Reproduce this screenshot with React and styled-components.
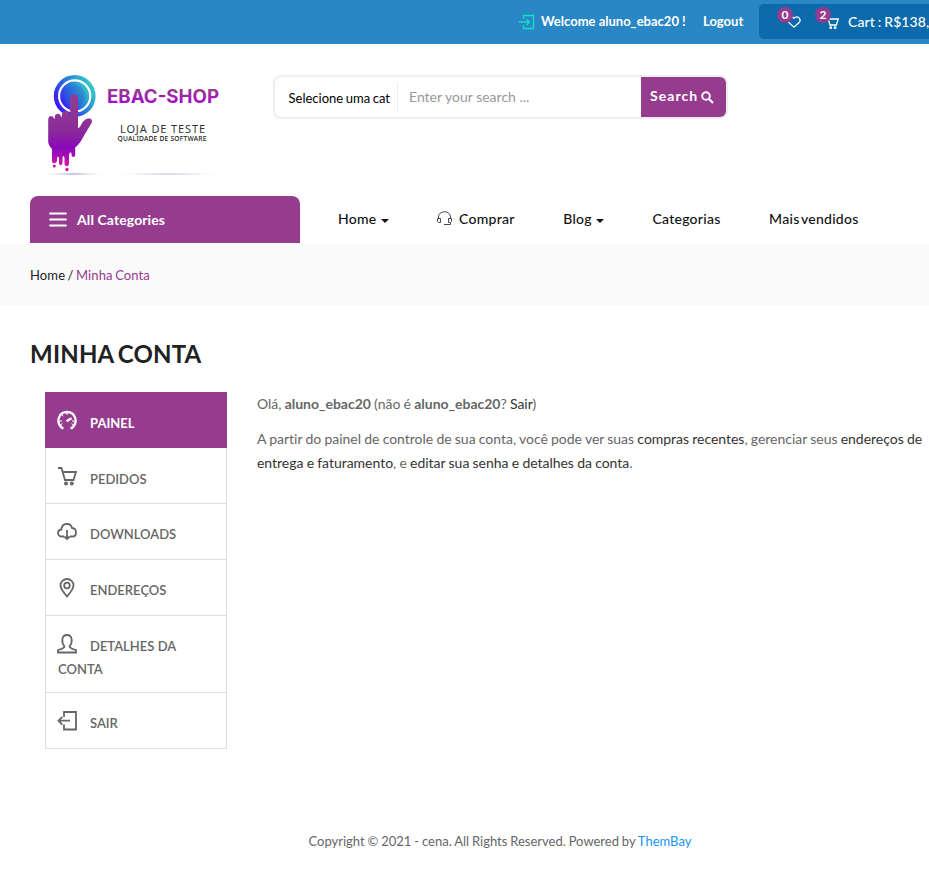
import React from "react";
import styled, { createGlobalStyle, css } from "styled-components";

const GlobalStyle = createGlobalStyle`
  *, *::before, *::after { box-sizing: border-box; }
  body {
    margin: 0;
    background: #fff;
    color: #666;
    font-family: Lato, "Liberation Sans", sans-serif;
    font-size: 14px;
    line-height: 24px;
    overflow: hidden;
  }
`;

const purple = "#963c8e";

const Page = styled.div`
  width: 929px;
  height: 887px;
  overflow: hidden;
`;

const TopBar = styled.div`
  display: flex;
  height: 44px;
  padding: 4px 0 0 519px;
  background: #2a87c5;
  color: #fff;
  white-space: nowrap;
`;

const Account = styled.div`
  display: flex;
  align-items: center;
  height: 35px;
  width: 240px;
  flex: none;
  font-size: 13px;
  font-weight: 700;
  line-height: 22px;
  padding-bottom: 1px;

  svg { margin-top: 1px; }
`;

const Welcome = styled.span`
  width: 162px;
  margin-left: 6px;
`;

const Logout = styled.a`
  color: #fff;
`;

const MiniCart = styled.div`
  display: flex;
  align-items: center;
  flex: none;
  width: 230px;
  height: 35px;
  padding-left: 27px;
  border-radius: 5px;
  background: #0b6aab;
`;

const IconWithBadge = styled.div`
  position: relative;
  display: flex;
  width: 15px;
  height: 15px;
  margin-right: ${(p) => p.$gap};
`;

const Badge = styled.span`
  position: absolute;
  left: -9px;
  top: -7px;
  width: 16px;
  height: 16px;
  border-radius: 50%;
  background: ${purple};
  font-size: 12px;
  font-weight: 700;
  line-height: 16px;
  text-align: center;
`;

const CartTotal = styled.span`
  font-size: 14px;
  font-weight: 500;
  word-spacing: -0.8px;
  letter-spacing: 0.1px;
`;

const Header = styled.header`
  display: flex;
  height: 152px;
  padding: 21px 30px 0;
`;

const Brand = styled.div`
  width: 243px;
  height: 120px;
`;

const SearchBox = styled.form`
  display: flex;
  align-items: center;
  width: 455px;
  height: 44px;
  margin-top: 10px;
  border: 2px solid #eee;
  border-radius: 8px;
  overflow: hidden;
`;

const CategorySelect = styled.div`
  width: 123px;
  height: 30px;
  padding-left: 13.5px;
  border-right: 1px solid #eee;
  color: #000;
  font-size: 13px;
  word-spacing: -0.7px;
  line-height: 32px;
  white-space: nowrap;
`;

const SearchField = styled.div`
  flex: 1;
  padding-left: 11px;
  color: #999;
  line-height: 40px;
`;

const SearchButton = styled.div`
  display: flex;
  align-items: center;
  gap: 3px;
  width: 85px;
  height: 40px;
  padding: 0 0 2px 9px;
  background: ${purple};
  color: #fff;
  font-weight: 700;
  font-size: 14px;
  letter-spacing: 1.05px;

  svg { margin-top: 3px; }
`;

const NavBar = styled.nav`
  display: flex;
  height: 48px;
  padding-left: 30px;
  color: #111;
`;

const AllCategories = styled.div`
  display: flex;
  align-items: center;
  gap: 10px;
  width: 270px;
  height: 47px;
  padding-left: 19px;
  border-radius: 8px 8px 0 0;
  background: ${purple};
  color: #fff;
  font-weight: 700;
  letter-spacing: 0.1px;
`;

const NavItems = styled.div`
  display: flex;
  gap: 48.6px;
  height: 46px;
  padding-left: 38px;
`;

const NavItem = styled.div`
  display: flex;
  align-items: center;
  font-weight: 500;
  font-size: 14px;
  letter-spacing: 0.26px;
  word-spacing: -2px;
  white-space: nowrap;
`;

const Caret = styled.span`
  margin: 4px 0 0 4px;
  border: 4px solid transparent;
  border-top-color: #111;
  border-bottom: 0;
`;

const Breadcrumb = styled.div`
  height: 61px;
  padding: 19px 30px 0;
  background: #fafafa;
  color: ${purple};
  font-size: 13px;
  word-spacing: -1px;
  letter-spacing: 0.12px;
`;

const Crumb = styled.span`
  color: #222;
`;

const Title = styled.h1`
  margin: 33px 0 0 30px;
  height: 54px;
  color: #222;
  font-size: 24px;
  letter-spacing: 0.2px;
  word-spacing: -2px;
  line-height: 32px;
  font-weight: 700;
`;

const Content = styled.main`
  display: flex;
  padding-left: 45px;
`;

const Menu = styled.nav`
  flex: none;
  width: 182px;
`;

const MenuIcon = styled.svg`
  width: 20px;
  height: 20px;
  margin: 0 13px 0 -1px;
  vertical-align: -2px;
  fill: none;
  stroke: currentColor;
  stroke-width: 1.8;
`;

const MenuItem = styled.a`
  display: block;
  height: ${(p) => p.$height || 56}px;
  padding: 18px 12px 0;
  border: 1px solid #ddd;
  border-top: 0;
  color: #666;
  font-size: 13px;
  font-weight: 600;
  line-height: 23px;

  &:nth-child(n + 3) ${MenuIcon} {
    vertical-align: -3px;
  }

  ${(p) =>
    p.$active &&
    css`
      border-color: ${purple};
      background: ${purple};
      color: #fff;
      font-weight: 700;
    `}
`;

const Body = styled.div`
  width: 684px;
  padding-left: 30px;
  letter-spacing: -0.025px;
  word-spacing: -0.3px;
`;

const Paragraph = styled.p`
  margin: 0 0 11px;
  white-space: nowrap;
`;

const DarkLink = styled.a`
  color: #333;
`;

const Footer = styled.footer`
  margin: 80px 0 0 308.5px;
  font-size: 13px;
  word-spacing: -0.45px;
  white-space: nowrap;
`;

const BlueLink = styled.a`
  color: #1695f0;
`;

function Logo() {
  return (
    <svg width="210" height="120" viewBox="0 0 210 120">
      <defs>
        <linearGradient id="ring" x1="0" y1="0.8" x2="1" y2="0.2">
          <stop offset="0" stopColor="#3a10ff" />
          <stop offset="0.55" stopColor="#287fd8" />
          <stop offset="1" stopColor="#36d0c8" />
        </linearGradient>
        <linearGradient id="hand" x1="0" y1="0" x2="0" y2="1">
          <stop offset="0" stopColor="#963c8e" />
          <stop offset="0.5" stopColor="#8a2c98" />
          <stop offset="0.74" stopColor="#8808b8" />
          <stop offset="0.84" stopColor="#a010b8" />
          <stop offset="1" stopColor="#e312a5" />
        </linearGradient>
        <linearGradient id="word" x1="0" y1="0" x2="0" y2="1">
          <stop offset="0.2" stopColor="#963c8e" />
          <stop offset="0.85" stopColor="#a40cce" />
        </linearGradient>
        <radialGradient id="shade">
          <stop offset="0" stopColor="#a3a3d2" />
          <stop offset="1" stopColor="#fff" stopOpacity="0" />
        </radialGradient>
      </defs>
      <circle cx="44.700" cy="31" r="18.800" fill="none" stroke="url(#ring)" strokeWidth="4.200" />
      <circle cx="44.700" cy="31" r="14.500" fill="url(#ring)" />
      <circle cx="44.700" cy="31" r="10.500" fill="#2865c9" opacity=".3" />
      <path
        fill="url(#hand)"
        d="M40.200 33C40.200 28 48 28 48 33V63Q49 64 51 60C53 56 55 54 58 53.500C62 53 63 56 61 59L55 69C52 74 50 79 45.200 82.500V90C45 92.500 42 92.500 41.500 90V88Q39 86 39 92V99C38.500 102 35 102 34.500 99V93Q33.500 89 32.500 93V98C32 101 29 101 29 98V93Q28 90 27 93V96C26 99 22 99 22 96V84Q18 80 18.200 76V54C19 50 23 50 24 53.500L24.800 54V51C26 48 30 48 31 51.500L32 52V49C33 45 38 45 39 48.500L40.200 51Z"
      />
      <circle cx="24.300" cy="101" r="1.500" fill="#c516a9" />
      <circle cx="37" cy="104.500" r="1.700" fill="#e312a5" />
      <ellipse cx="43" cy="109" rx="34" ry="2" fill="url(#shade)" />
      <ellipse cx="138" cy="109" rx="60" ry="1.300" fill="url(#shade)" />
      <text x="77" y="38" fill="url(#word)" fontFamily="Inter, sans-serif" fontWeight="700" fontSize="18.500" textLength="112" lengthAdjust="spacingAndGlyphs">EBAC-SHOP</text>
      <text x="90" y="68" fill="#333" fontFamily="Noto Sans, sans-serif" fontSize="11" textLength="85">LOJA DE TESTE</text>
      <text x="87.500" y="75.700" fill="#222" fontFamily="Noto Sans, sans-serif" fontWeight="500" fontSize="6.700" textLength="89">QUALIDADE DE SOFTWARE</text>
    </svg>
  );
}

function CartShape() {
  return (
    <>
      <path d="M1 2H4.500L8 14H16.500L19 6H5.700" />
      <circle cx="9" cy="17.500" r="1.100" />
      <circle cx="14.800" cy="17.500" r="1.100" />
    </>
  );
}

const icons = {
  gauge: (
    <>
      <path strokeWidth="2.300" d="M6.500 18H5C-1.500 12 1.500 2 10 2S21.500 12 15 18H13.500" />
      <path strokeWidth="2.200" d="M9.500 11.300L14.500 8.300" />
      <path strokeWidth="1" d="M10 3V5M5 5L6.300 6.300M3 11H5M17 11H15M4 14.500L5.500 13.700M16 14.500L14.500 13.700" />
    </>
  ),
  cart: <CartShape />,
  cloud: (
    <>
      <path d="M7 14.500H5C0 14.500-.2 8 4.300 7.500C5 0 14 .8 15 6C20.500 6.500 20 14.500 15.500 14.500H13" />
      <path d="M10 8V17M7.300 14.500L10 17L12.700 14.500" />
    </>
  ),
  pin: (
    <>
      <path d="M10 18.500C7 15 3.500 11 3.500 7.500A6.500 6.500 0 0 1 16.500 7.500C16.500 11 13 15 10 18.500Z" />
      <circle cx="10" cy="7.500" r="2.800" />
    </>
  ),
  user: <path d="M1 18.500V16Q7 14.500 7.500 12.500C4 8 4.500 1 10 1S16 8 12.500 12.500Q13 14.500 19 16V18.500Z" />,
  exit: <path d="M7 6V1H19V18.500H7V13.500M13 9.700H1.500M5.300 5.800L1.500 9.700L5.300 13.600" />,
};

const menu = [
  { label: "PAINEL", icon: "gauge", active: true },
  { label: "PEDIDOS", icon: "cart" },
  { label: "DOWNLOADS", icon: "cloud" },
  { label: "ENDEREÇOS", icon: "pin" },
  { label: "DETALHES DA CONTA", icon: "user", height: 77 },
  { label: "SAIR", icon: "exit" },
];

export default function App() {
  return (
    <Page>
      <GlobalStyle />
      <TopBar>
        <Account>
          <svg width="16" height="16" viewBox="0 0 16 16" fill="none" stroke="#10e2c4" strokeWidth="1.300">
            <path d="M4.500 5V1.500H14.500V14.500H4.500V11M0 8H10.500M7.500 5L10.500 8L7.500 11" />
          </svg>
          <Welcome>Welcome aluno_ebac20 !</Welcome>
          <Logout>Logout</Logout>
        </Account>
        <MiniCart>
          <IconWithBadge $gap="23px">
            <svg width="16" height="16" viewBox="0 0 16 16" fill="none" stroke="#fff" strokeWidth="1.300">
              <path d="M8.500 13.500L3 8.500C0 5 5 0 8.500 4C12 0 17 5 14 8.500Z" />
            </svg>
            <Badge>0</Badge>
          </IconWithBadge>
          <IconWithBadge $gap="9px">
            <svg width="15" height="16" viewBox="0 0 20 20" fill="none" stroke="#fff" strokeWidth="1.700">
              <CartShape />
            </svg>
            <Badge>2</Badge>
          </IconWithBadge>
          <CartTotal>Cart : R$138,00</CartTotal>
        </MiniCart>
      </TopBar>
      <Header>
        <Brand><Logo /></Brand>
        <SearchBox>
          <CategorySelect>Selecione uma cat</CategorySelect>
          <SearchField>Enter your search ...</SearchField>
          <SearchButton>
            Search
            <svg width="13" height="13" viewBox="0 0 13 13" fill="none" stroke="#fff" strokeWidth="1.900">
              <circle cx="5" cy="5" r="3.800" />
              <path strokeWidth="2.200" d="M8 8L12 12" />
            </svg>
          </SearchButton>
        </SearchBox>
      </Header>
      <NavBar>
        <AllCategories>
          <svg width="18" height="15" viewBox="0 0 18 15" stroke="#fff" strokeWidth="2.200" strokeLinecap="round">
            <path d="M1.200 1.500H16.800M1.200 7.500H16.800M1.200 13.500H16.800" />
          </svg>
          All Categories
        </AllCategories>
        <NavItems>
          <NavItem>Home<Caret /></NavItem>
          <NavItem>
            <svg width="22" height="16" viewBox="0 0 22 16" fill="none" stroke="#333" strokeWidth="0.900">
              <path d="M1.500 8V6C1.500-1 13.500-1 13.500 6V8M.5 7.500H3.500V11.500H1.500L.5 10.500ZM14.500 7.500H11.500V11.500H13.500L14.500 10.500ZM13.500 12V13.500H7" />
            </svg>
            Comprar
          </NavItem>
          <NavItem>Blog<Caret /></NavItem>
          <NavItem>Categorias</NavItem>
          <NavItem>Mais vendidos</NavItem>
        </NavItems>
      </NavBar>
      <Breadcrumb><Crumb>Home / </Crumb>Minha Conta</Breadcrumb>
      <Title>MINHA CONTA</Title>
      <Content>
        <Menu>
          {menu.map((item) => (
            <MenuItem key={item.label} $active={item.active} $height={item.height}>
              <MenuIcon viewBox="0 0 20 20">{icons[item.icon]}</MenuIcon>
              {item.label}
            </MenuItem>
          ))}
        </Menu>
        <Body>
          <Paragraph>
            Olá, <strong>aluno_ebac20</strong> (não é <strong>aluno_ebac20</strong>? <DarkLink>Sair</DarkLink>)
          </Paragraph>
          <Paragraph>
            A partir do painel de controle de sua conta, você pode ver suas <DarkLink>compras recentes</DarkLink>, gerenciar seus <DarkLink>endereços de<br />entrega e faturamento</DarkLink>, e <DarkLink>editar sua senha e detalhes da conta</DarkLink>.
          </Paragraph>
        </Body>
      </Content>
      <Footer>Copyright © 2021 - cena. All Rights Reserved. Powered by <BlueLink>ThemBay</BlueLink></Footer>
    </Page>
  );
}
